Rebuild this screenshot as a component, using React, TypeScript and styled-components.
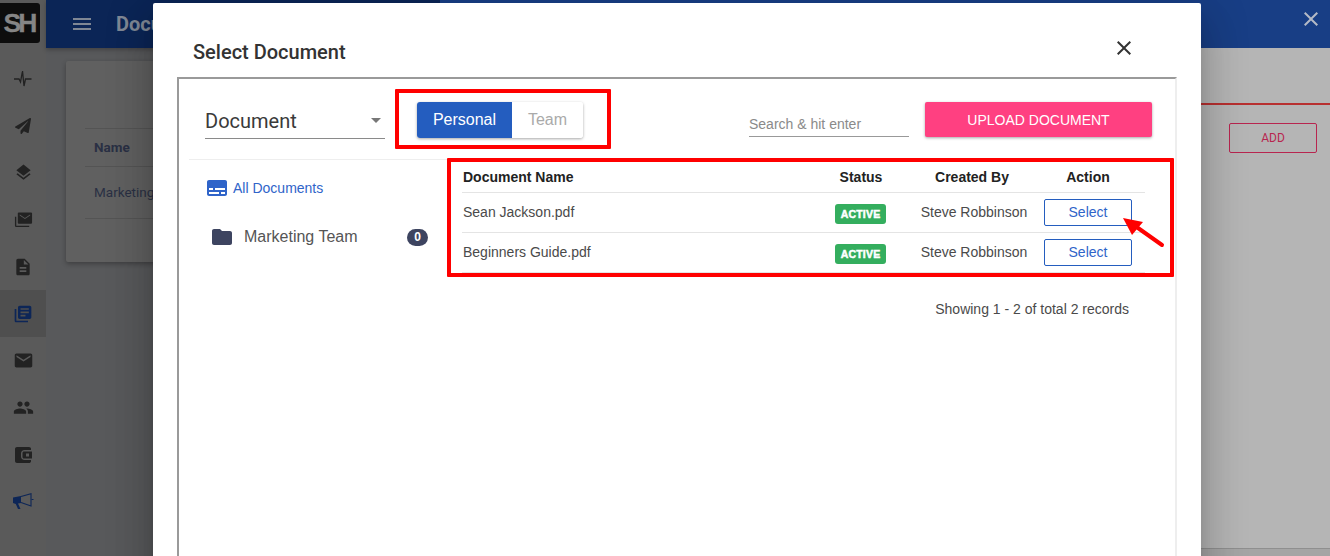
import React from "react";
import styled, { createGlobalStyle } from "styled-components";
import { MdLayers, MdDescription, MdLibraryBooks, MdEmail, MdPeople, MdFolder, MdClose, MdMenu, MdSubtitles, MdArrowDropDown } from "react-icons/md";
import { FaPaperPlane } from "react-icons/fa";

const Global = createGlobalStyle`
  html, body { margin: 0; padding: 0; background: #58595b; }
  * { box-sizing: border-box; }
  #root { width: 1330px; height: 556px; overflow: hidden; }
`;

const Page = styled.div`
  position: relative; display: flex; width: 1330px; height: 556px; overflow: hidden;
  font-family: "Liberation Sans", Arial, sans-serif;
`;
const Sidebar = styled.nav`
  width: 46px; flex: none; background: #5a5a5a; display: flex; flex-direction: column; align-items: stretch;
`;
const Logo = styled.div`
  width: 40px; height: 40px; margin-top: 3px; background: #0d0d0d; border-radius: 0 3px 3px 0; color: #858585;
  font: 700 26.5px/40px "Liberation Sans", sans-serif; letter-spacing: -3px; text-align: center; -webkit-text-stroke: .3px #858585; padding-right: 2px;
`;
const NavList = styled.div`
  display: flex; flex-direction: column; margin-top: 12px;
`;
const NavItem = styled.div<{ $active?: boolean; $accent?: boolean }>`
  height: 47px; display: flex; align-items: center; justify-content: center;
  color: ${p => (p.$accent ? "#0d2657" : "#222")};
  background: ${p => (p.$active ? "#4f4f4f" : "transparent")};
`;
const LeftPane = styled.div`
  width: 394px; flex: none; background: #58595b; display: flex; flex-direction: column;
`;
const RightPane = styled.div`
  flex: 1; background: #b5b5b5; display: flex; flex-direction: column;
`;
const LeftHeader = styled.header`
  height: 48px; background: #0b2556; display: flex; align-items: center; padding-left: 24px; gap: 22px;
  color: #7f8794; box-shadow: 0 2px 4px rgba(0,0,0,.25);
`;
const HeaderTitle = styled.div`
  font: 700 20px Roboto, sans-serif; white-space: nowrap;
`;
const RightHeader = styled.header`
  height: 48px; background: #183e85; display: flex; align-items: flex-start; justify-content: flex-end;
  padding: 7px 7px 0 0; color: #b4bac6; flex: none;
`;
const Card = styled.section`
  margin: 13px 0 0 20px; height: 201px; background: #606060; box-shadow: 0 2px 5px rgba(0,0,0,.3);
  padding-top: 67px; padding-left: 19px; border-radius: 2px 0 0 2px;
`;
const CardRow = styled.div<{ $h: number; $bold?: boolean }>`
  height: ${p => p.$h}px; border-top: 1px solid #545454; padding: 0 0 2px 9px; display: flex; align-items: center;
  font: ${p => (p.$bold ? 700 : 400)} 13.5px Roboto, sans-serif; color: #2a3044;
`;
const RightBody = styled.div`
  flex: 1; display: flex; flex-direction: column; padding-top: 55px;
`;
const Rule = styled.div`
  height: 2px; background: #b83030;
`;
const AddWrap = styled.div`
  display: flex; justify-content: flex-end; padding: 18px 13px 0 0;
`;
const AddButton = styled.div`
  width: 88px; height: 30px; border: 1px solid #b8254f; border-radius: 2px; color: #b8254f;
  font: 400 12px/28px Roboto, sans-serif; text-align: center;
`;
const FootLine = styled.div`
  margin-top: auto; height: 8px; background: #a5a5a5; border-top: 1px solid #8f8f8f;
`;

const Modal = styled.div`
  position: absolute; left: 153px; top: 3px; width: 1048px; height: 600px; background: #fff; border-radius: 2px;
  box-shadow: 0 11px 15px -7px rgba(0,0,0,.2), 0 24px 38px 3px rgba(0,0,0,.14), 0 9px 46px 8px rgba(0,0,0,.12);
  display: flex; flex-direction: column;
`;
const ModalHead = styled.div`
  height: 74px; flex: none; display: flex; justify-content: space-between; padding: 37px 65px 0 40px;
`;
const ModalTitle = styled.h2`
  margin: 0; font: 500 20px/24px Roboto, sans-serif; color: #333;
`;
const CloseBtn = styled.div`
  color: #333; margin-top: -4px; height: 24px;
`;
const Frame = styled.div`
  flex: 1; margin: 0 24px; border-top: 2px solid #9a9a9a; border-left: 2px solid #9a9a9a; border-right: 2px solid #eee;
`;
const Toolbar = styled.div`
  height: 79px; display: flex; padding-left: 26px; padding-right: 23px; align-items: flex-start;
`;
const SelectBox = styled.div`
  width: 180px; height: 38px; margin-top: 22px; padding-top: 3px; border-bottom: 1px solid #8a8a8a; display: flex; align-items: center; justify-content: space-between;
  font: 400 20px/34px Roboto, sans-serif; color: #3a3a3a;
`;
const SelectArrow = styled.span`
  color: #777; display: flex; margin: -2px -3px 0 0;
`;
const RedOutline = styled.div`
  margin: 10px 0 0 10px; width: 216px; height: 60px; border: 4px solid #f00; border-radius: 1px; padding: 9px 0 0 18px;
`;
const Toggle = styled.div`
  display: flex; width: 166px; height: 36px; border-radius: 3px; overflow: hidden; box-shadow: 0 1px 3px rgba(0,0,0,.35);
`;
const ToggleBtn = styled.div<{ $on?: boolean }>`
  height: 36px; width: ${p => (p.$on ? 95 : 71)}px; text-align: center; font-size: 16px; line-height: 35px;
  background: ${p => (p.$on ? "#245dbf" : "#fff")}; color: ${p => (p.$on ? "#fff" : "#aaa")};
`;
const SearchBox = styled.div`
  width: 160px; height: 38px; margin: 20px 0 0 auto; border-bottom: 1px solid #999; color: #8a8a8a;
  font-size: 14px; line-height: 16px; padding-top: 17px;
`;
const UploadBtn = styled.div`
  width: 227px; height: 35px; margin: 23px 0 0 16px; background: #ff4081; color: #fff; border-radius: 2px;
  box-shadow: 0 1px 3px rgba(0,0,0,.35); font-size: 14px; line-height: 37px; text-align: center;
`;
const Body = styled.div`
  display: flex; align-items: flex-start;
`;
const SideCol = styled.div`
  width: 258px; margin: 1px 0 0 10px; border-top: 1px solid #eee; flex: none;
`;
const AllDocs = styled.div`
  display: flex; align-items: center; gap: 4px; margin: 15px 0 0 16px; height: 26px; color: #2f64c9; font-size: 14px;
`;
const FolderRow = styled.div`
  display: flex; align-items: center; margin: 23px 0 0 21px; height: 26px; color: #555; font-size: 16px;
`;
const FolderName = styled.span`
  margin-left: 10px; flex: 1;
`;
const CountPill = styled.span`
  width: 21px; height: 17px; margin-right: 19px; border-radius: 9px; background: #3d4460; color: #fff;
  font: 700 12px/17px "Liberation Sans", sans-serif; text-align: center;
`;
const TableCol = styled.div`
  width: 727px; flex: none;
`;
const TableOutline = styled.div`
  width: 727px; height: 119px; border: 4px solid #f00; border-radius: 1px; padding-left: 11px;
`;
const Row = styled.div<{ $head?: boolean }>`
  width: 683px; height: ${p => (p.$head ? 31 : 40)}px; display: grid; grid-template-columns: 347px 104px 118px 114px; align-items: center;
  border-bottom: 1px solid #e4e4e4; font-size: 14px; color: #4a4a4a;
`;
const HeadCell = styled.div<{ $center?: boolean }>`
  font-weight: 700; font-size: 14px; color: #222; padding-left: ${p => (p.$center ? 0 : 1)}px; text-align: ${p => (p.$center ? "center" : "left")};
`;
const Cell = styled.div<{ $center?: boolean; $pad?: number }>`
  padding-left: ${p => p.$pad ?? 1}px; white-space: nowrap; display: flex; justify-content: ${p => (p.$center ? "center" : "flex-start")};
  line-height: 14px; padding-bottom: 1px;
`;
const StatusCell = styled.div`
  display: flex; justify-content: center; padding-top: 3px;
`;
const ActionCell = styled.div`
  display: flex; justify-content: center;
`;
const Badge = styled.span`
  width: 51px; height: 20px; margin-right: 1px; border-radius: 3px; background: #34ae5e; color: #fff; font-weight: 700; font-size: 10.5px; line-height: 21px; text-align: center;
  letter-spacing: .2px; -webkit-text-stroke: .5px #fff;
`;
const SelectBtn = styled.div`
  width: 88px; height: 27px; border: 1px solid #245dbf; border-radius: 2px; color: #2f64c9; text-align: center; line-height: 25px; background: #fff;
`;
const Records = styled.div`
  margin-top: 24px; padding-right: 45px; text-align: right; font-size: 14px; color: #4a4a4a; line-height: 16px;
`;
const Arrow = styled.svg`
  position: absolute; left: 1118px; top: 212px; width: 50px; height: 38px;
`;

const iconPulse = (
  <svg width="20" height="20" viewBox="0 0 20 20" fill="none" stroke="currentColor" strokeWidth="1.3"><path d="M1 10h5l1.500 3L9.500 2l1.500 15 1.500-7h6" /></svg>
);
const iconMailStack = (
  <svg width="19" height="19" viewBox="0 0 20 20" fill="currentColor"><path d="M1 7v9.500c0 .8.7 1.500 1.500 1.500H16v-1.400H2.400V7z" /><path fillRule="evenodd" d="M5 2.500h13c.6 0 1 .4 1 1v10c0 .6-.4 1-1 1H5c-.6 0-1-.4-1-1v-10c0-.6.4-1 1-1zm1 2.200v1.100l5.500 3.700L17 5.800V4.700l-5.500 3.600z" /></svg>
);
const iconWallet = (
  <svg width="20" height="20" viewBox="0 0 20 20" fill="currentColor"><path fillRule="evenodd" d="M4 2h12c1 0 2 .8 2 1.800V5h-6.500C9.500 5 8 6.400 8 8.300v3.400C8 13.600 9.500 15 11.500 15H18v1.200c0 1-1 1.800-2 1.800H4c-1.100 0-2-.9-2-2V4c0-1.100.9-2 2-2zm7 4.500h8v7h-8c-.8 0-1.500-.7-1.500-1.500V8c0-.8.7-1.500 1.500-1.500zm2 2v3h3v-3z" /></svg>
);
const iconHorn = (
  <svg width="21" height="17" viewBox="0 0 21 17">
    <path d="M0 4.500 8 3v7l-3 .5L7.500 16H5L2.800 11 0 10z" fill="currentColor" />
    <path d="M8 3.500 18 .8V13L8 9.500" fill="none" stroke="currentColor" strokeWidth="1.100" />
    <path d="M18.500 6.500h2" stroke="currentColor" strokeWidth="1" />
  </svg>
);

export default function App() {
  const rows = ["Sean Jackson.pdf", "Beginners Guide.pdf"];
  return (
    <Page>
      <Global />
      <Sidebar>
        <Logo>SH</Logo>
        <NavList>
          <NavItem>{iconPulse}</NavItem>
          <NavItem><FaPaperPlane size={16} /></NavItem>
          <NavItem><MdLayers size={19} /></NavItem>
          <NavItem>{iconMailStack}</NavItem>
          <NavItem><MdDescription size={20} /></NavItem>
          <NavItem $active $accent><MdLibraryBooks size={20} /></NavItem>
          <NavItem><MdEmail size={21} /></NavItem>
          <NavItem><MdPeople size={21} /></NavItem>
          <NavItem>{iconWallet}</NavItem>
          <NavItem $accent>{iconHorn}</NavItem>
        </NavList>
      </Sidebar>
      <LeftPane>
        <LeftHeader>
          <MdMenu size={24} />
          <HeaderTitle>Documents</HeaderTitle>
        </LeftHeader>
        <Card>
          <CardRow $h={38} $bold>Name</CardRow>
          <CardRow $h={52}>Marketing</CardRow>
          <CardRow $h={1}></CardRow>
        </Card>
      </LeftPane>
      <RightPane>
        <RightHeader><MdClose size={24} /></RightHeader>
        <RightBody>
          <Rule />
          <AddWrap><AddButton>ADD</AddButton></AddWrap>
          <FootLine />
        </RightBody>
      </RightPane>
      <Modal>
        <ModalHead>
          <ModalTitle>Select Document</ModalTitle>
          <CloseBtn><MdClose size={24} /></CloseBtn>
        </ModalHead>
        <Frame>
          <Toolbar>
            <SelectBox>Document<SelectArrow><MdArrowDropDown size={24} /></SelectArrow></SelectBox>
            <RedOutline>
              <Toggle>
                <ToggleBtn $on>Personal</ToggleBtn>
                <ToggleBtn>Team</ToggleBtn>
              </Toggle>
            </RedOutline>
            <SearchBox>Search &amp; hit enter</SearchBox>
            <UploadBtn>UPLOAD DOCUMENT</UploadBtn>
          </Toolbar>
          <Body>
            <SideCol>
              <AllDocs><MdSubtitles size={24} />All Documents</AllDocs>
              <FolderRow><MdFolder size={24} color="#3d4460" /><FolderName>Marketing Team</FolderName><CountPill>0</CountPill></FolderRow>
            </SideCol>
            <TableCol>
              <TableOutline>
                <Row $head>
                  <HeadCell>Document Name</HeadCell>
                  <HeadCell $center>Status</HeadCell>
                  <HeadCell $center>Created By</HeadCell>
                  <HeadCell $center>Action</HeadCell>
                </Row>
                {rows.map(r => (
                  <Row key={r}>
                    <Cell>{r}</Cell>
                    <StatusCell><Badge>ACTIVE</Badge></StatusCell>
                    <Cell $center $pad={4}>Steve Robbinson</Cell>
                    <ActionCell><SelectBtn>Select</SelectBtn></ActionCell>
                  </Row>
                ))}
              </TableOutline>
              <Records>Showing 1 - 2 of total 2 records</Records>
            </TableCol>
          </Body>
        </Frame>
      </Modal>
      <Arrow viewBox="0 0 50 38">
        <path d="M44 33 L20 16" stroke="#f00" strokeWidth="4" strokeLinecap="round" />
        <path d="M5 6 L25 10 L14 23 Z" fill="#f00" />
      </Arrow>
    </Page>
  );
}
